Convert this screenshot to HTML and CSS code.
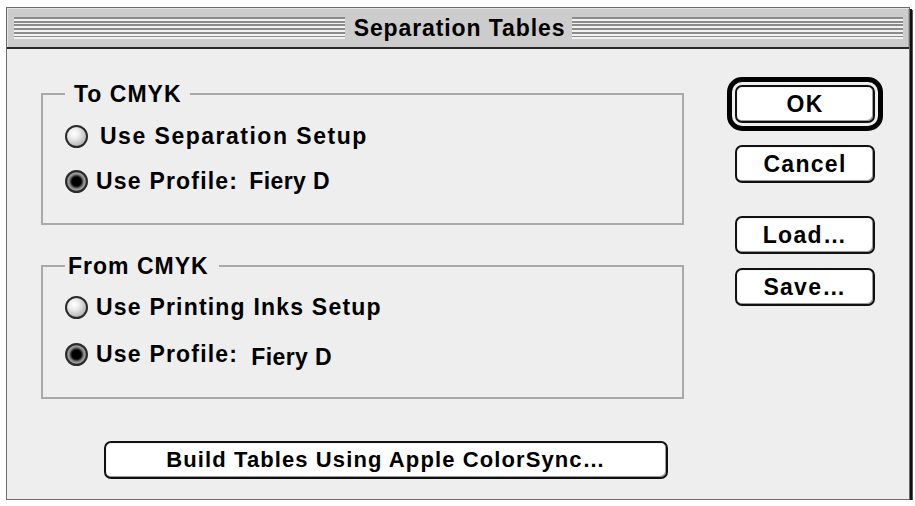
FILE: index.html
```html
<!DOCTYPE html>
<html>
<head>
<meta charset="utf-8">
<title>Separation Tables</title>
<link rel="stylesheet" href="styles.css">
</head>
<body>
<div class="window">
  <div class="titlebar">
    <div class="stripes"></div>
    <div class="title">Separation Tables</div>
    <div class="stripes"></div>
  </div>
  <div class="content">
    <div class="main">
      <fieldset class="group group-to">
        <legend>To CMYK</legend>
        <div class="option option-first"><span class="radio"></span><span class="label label-wide">Use Separation Setup</span></div>
        <div class="option option-second"><span class="radio on"></span><span class="label">Use Profile:<span class="profile">Fiery D</span></span></div>
      </fieldset>
      <fieldset class="group group-from">
        <legend>From CMYK</legend>
        <div class="option option-first"><span class="radio"></span><span class="label">Use Printing Inks Setup</span></div>
        <div class="option option-second"><span class="radio on"></span><span class="label">Use Profile:<span class="profile profile-low">Fiery D</span></span></div>
      </fieldset>
      <div class="build-row">
        <button class="btn btn-build">Build Tables Using Apple ColorSync…</button>
      </div>
    </div>
    <div class="side">
      <div class="default-ring"><button class="btn">OK</button></div>
      <button class="btn btn-cancel">Cancel</button>
      <button class="btn btn-load">Load…</button>
      <button class="btn btn-save">Save…</button>
    </div>
  </div>
</div>
</body>
</html>
```
FILE: styles.css
```css
html, body {
  margin: 0;
  padding: 0;
  background: #ffffff;
}

body {
  font-family: "Liberation Sans", Arial, sans-serif;
  font-weight: bold;
  color: #000;
}

.window {
  margin: 7px 0 0 6px;
  width: 902px;
  height: 491px;
  border: 1px solid #6c6c6c;
  box-shadow: 2px 2px 0 #111, 3px 3px 0 #555;
  background: #eeeeee;
  display: flex;
  flex-direction: column;
}

.titlebar {
  height: 39px;
  border-bottom: 2px solid #262626;
  background: #cccccc;
  box-shadow: inset 1px 1px 0 #e2e2e2, inset -1px 0 0 #a8a8a8;
  display: flex;
  align-items: center;
  padding: 0 6px 0 7px;
}

.stripes {
  flex: 1;
  height: 22px;
  margin-top: 1px;
  background: repeating-linear-gradient(to bottom, #8c8c8c 0 1.8px, #f2f2f2 1.8px 3.7px);
}

.title {
  padding: 0 7px 0 9px;
  font-size: 23px;
  letter-spacing: 0.9px;
  line-height: 39px;
  transform: scaleY(1.08);
}

.content {
  flex: 1;
  display: flex;
  padding: 28px 0 0 34px;
  gap: 43px;
}

.main {
  width: 643px;
  margin-top: 5px;
  display: flex;
  flex-direction: column;
}

.group {
  margin: 0;
  border: 2px solid #a9a9a9;
  padding: 0 0 0 22px;
  min-width: 0;
}

.group legend {
  font-size: 23px;
  line-height: 24px;
  letter-spacing: 1px;
  padding: 0 8px 0 9px;
  background: #eeeeee;
}

.group-to {
  padding-top: 10px;
  padding-bottom: 22px;
}

.group-from {
  margin-top: 29px;
  padding-top: 9px;
  padding-bottom: 23px;
}

.group-from legend {
  padding: 0 10px 0 3px;
}

.option {
  display: flex;
  align-items: center;
  height: 40px;
  gap: 8px;
}

.group-to .option-second {
  margin-top: 5px;
}

.group-from .option-second {
  margin-top: 7px;
}

.radio {
  flex: none;
  width: 19px;
  height: 19px;
  border-radius: 50%;
  border: 2px solid #2a2a2a;
  background: radial-gradient(circle at 38% 35%, #ffffff 0, #ececec 30%, #b4b4b4 75%, #8a8a8a 100%);
}

.radio.on {
  background: radial-gradient(circle at 50% 50%, #000 0 4.5px, #2a2a2a 5.5px, #7a7a7a 7px, #a0a0a0 8.5px, #6a6a6a 9.5px);
}

.label {
  font-size: 23px;
  letter-spacing: 1.2px;
  white-space: nowrap;
}

.label-wide {
  margin-left: 4px;
  letter-spacing: 1.5px;
}

.profile {
  margin-left: 11px;
  letter-spacing: 0.4px;
}

.profile-low {
  margin-left: 13px;
  position: relative;
  top: 3px;
}

.btn {
  display: block;
  box-sizing: border-box;
  width: 140px;
  height: 38px;
  margin: 0;
  padding: 0;
  background: #ffffff;
  border: 2px solid #111;
  border-radius: 7px;
  box-shadow: inset -1px -1px 0 #9a9a9a, inset 1px 1px 0 #f4f4f4;
  font-family: "Liberation Sans", Arial, sans-serif;
  font-weight: bold;
  font-size: 23px;
  letter-spacing: 1.3px;
  color: #000;
  text-align: center;
}

.build-row {
  margin-top: 42px;
  padding-left: 63px;
}

.btn-build {
  width: 564px;
  height: 38px;
  font-size: 22px;
  letter-spacing: 1.1px;
}

.side {
  width: 156px;
  display: flex;
  flex-direction: column;
  align-items: center;
}

.default-ring {
  border: 5px solid #000;
  border-radius: 15px;
  padding: 3px;
}

.btn-cancel {
  margin-top: 14px;
}

.btn-load {
  margin-top: 33px;
}

.btn-save {
  margin-top: 14px;
}
```
